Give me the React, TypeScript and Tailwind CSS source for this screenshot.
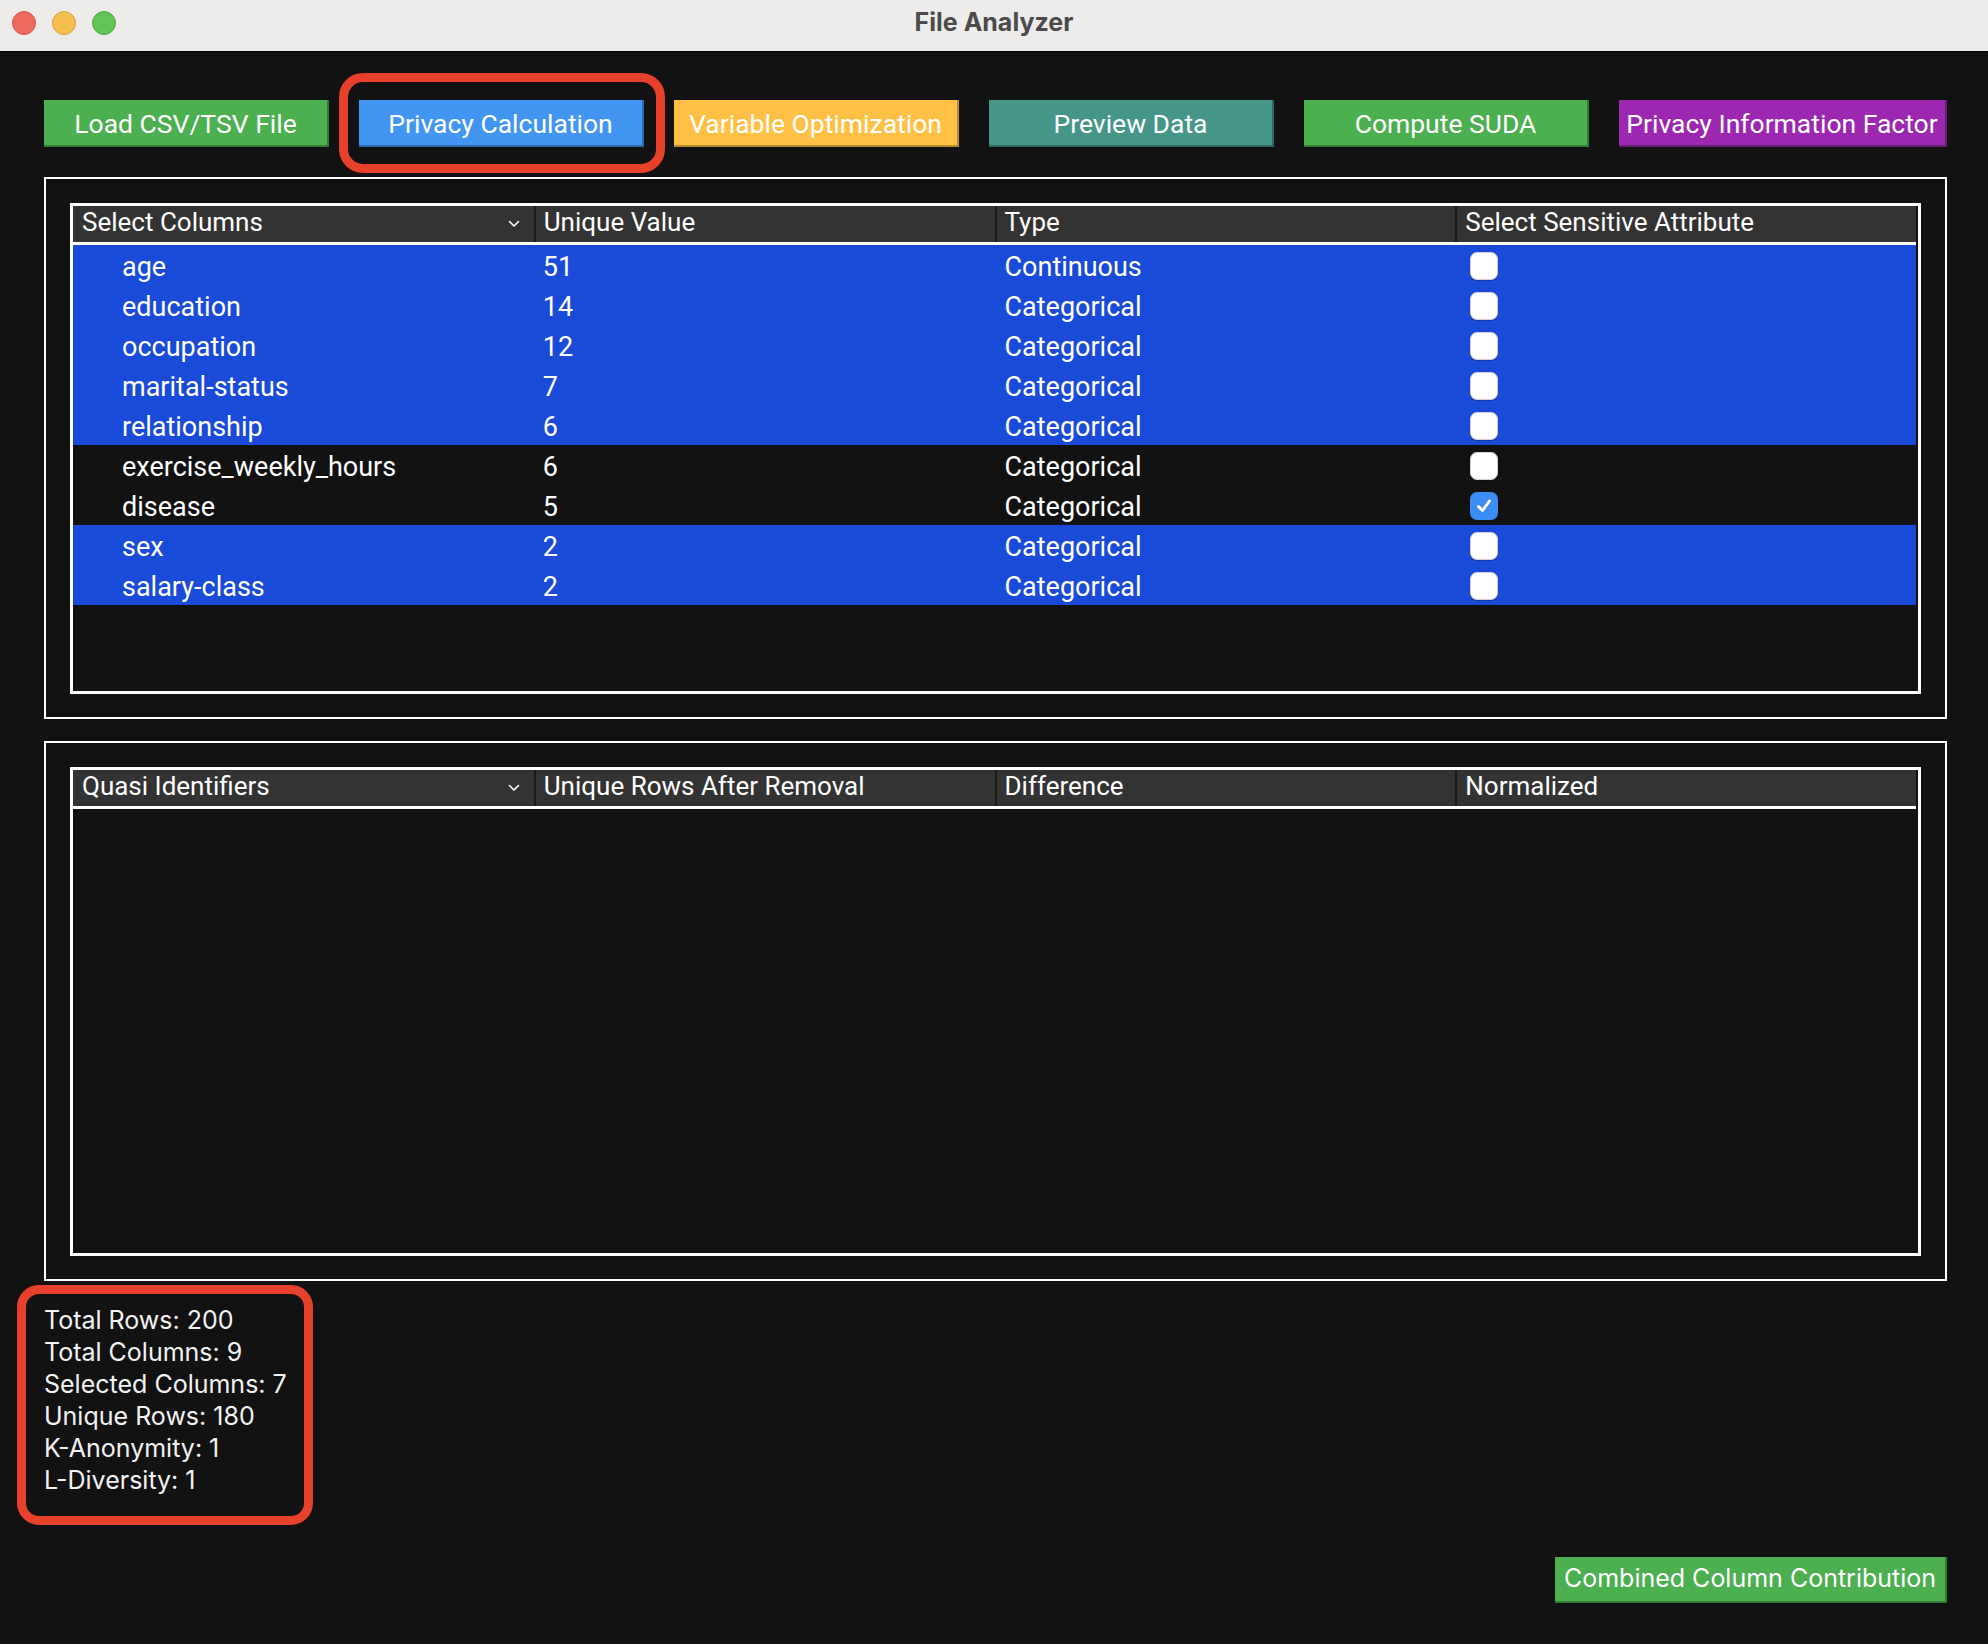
import React from "react";

type Row = { name: string; u: number; t: string; sel: boolean; chk: boolean };

const rows: Row[] = [
  { name: "age", u: 51, t: "Continuous", sel: true, chk: false },
  { name: "education", u: 14, t: "Categorical", sel: true, chk: false },
  { name: "occupation", u: 12, t: "Categorical", sel: true, chk: false },
  { name: "marital-status", u: 7, t: "Categorical", sel: true, chk: false },
  { name: "relationship", u: 6, t: "Categorical", sel: true, chk: false },
  { name: "exercise_weekly_hours", u: 6, t: "Categorical", sel: false, chk: false },
  { name: "disease", u: 5, t: "Categorical", sel: false, chk: true },
  { name: "sex", u: 2, t: "Categorical", sel: true, chk: false },
  { name: "salary-class", u: 2, t: "Categorical", sel: true, chk: false },
];

const roboto = { fontFamily: "Roboto, 'Liberation Sans', sans-serif" };
const inter = { fontFamily: "Inter, 'Noto Sans', sans-serif" };

function Checkbox({ checked }: { checked: boolean }) {
  if (checked) {
    return (
      <div className="flex h-[28px] w-[28px] items-center justify-center rounded-[7px] bg-[#3a8df5] shadow-[0_0_1px_rgba(0,0,0,0.6)]">
        <svg width="20" height="20" viewBox="0 0 20 20">
          <path
            d="M4.5 10.5 L8.5 14.5 L15.5 5"
            stroke="white"
            strokeWidth="2.9"
            fill="none"
            strokeLinecap="round"
            strokeLinejoin="round"
          />
        </svg>
      </div>
    );
  }
  return (
    <div className="h-[28px] w-[28px] rounded-[7px] border border-[#d0d0d0] bg-white shadow-[0_1px_1px_rgba(0,0,0,0.25)]" />
  );
}

function Chevron() {
  return (
    <svg width="12" height="8" viewBox="0 0 12 8">
      <path d="M1.5 1.5 L6 6 L10.5 1.5" stroke="white" strokeWidth="1.6" fill="none" strokeLinecap="round" strokeLinejoin="round" />
    </svg>
  );
}

function Header({ labels }: { labels: string[] }) {
  return (
    <div className="grid h-[39px] shrink-0 grid-cols-4 border-b-[3px] border-white bg-[#333333] text-[26px] text-white" style={roboto}>
      {labels.map((l, i) => (
        <div
          key={l}
          className={
            i === 0
              ? "flex items-center justify-between pb-[4px] pl-[9px] pr-[14px]"
              : "flex items-center border-l-2 border-[#1b1b1b] pb-[4px] pl-[8px]"
          }
        >
          <span className="leading-none">{l}</span>
          {i === 0 && (
            <span className="pt-[4px]">
              <Chevron />
            </span>
          )}
        </div>
      ))}
    </div>
  );
}

function Panel({ h, children }: { h: string; children: React.ReactNode }) {
  return (
    <div className={`${h} flex flex-col border-2 border-white px-[24px] pt-[24px] pb-[23px]`}>
      <div className="flex flex-1 flex-col border-[3px] border-white pr-[2px]">{children}</div>
    </div>
  );
}

function TopButton({ label, bg, edge, w }: { label: string; bg: string; edge: string; w: string }) {
  return (
    <div
      className={`${bg} ${edge} ${w} flex h-[47px] items-center justify-center whitespace-nowrap border-r-2 border-b-2 pt-[2px] text-[26.5px] text-white`}
      style={roboto}
    >
      {label}
    </div>
  );
}

export default function App() {
  return (
    <div className="flex h-[1644px] w-[1988px] flex-col overflow-hidden bg-[#121212]">
      {/* title bar */}
      <div className="relative flex h-[52px] shrink-0 items-center justify-center border-b border-black bg-[#edecea] pb-[5px]">
        <div className="absolute left-[12px] top-[11px] flex gap-[16px]">
          <div className="h-[24px] w-[24px] rounded-full border border-[#d8544a] bg-[#ee6a5e]" />
          <div className="h-[24px] w-[24px] rounded-full border border-[#d9a33d] bg-[#f5bf4f]" />
          <div className="h-[24px] w-[24px] rounded-full border border-[#52a942] bg-[#61c454]" />
        </div>
        <span className="text-[25px] font-bold text-[#4b4b4b]" style={inter}>
          File Analyzer
        </span>
      </div>

      <div className="flex flex-1 flex-col pl-[44px] pr-[41px]">
        {/* buttons */}
        <div className="mt-[48px] flex gap-[30px]">
          <TopButton label="Load CSV/TSV File" bg="bg-[#4caf50]" edge="border-[#2f7d32]" w="w-[285px]" />
          <div className="relative">
            <TopButton label="Privacy Calculation" bg="bg-[#4296f1]" edge="border-[#2a6bb5]" w="w-[285px]" />
            <div className="pointer-events-none absolute -left-[20px] -top-[27px] h-[100px] w-[326px] rounded-[24px] border-[9px] border-[#e8412b]" />
          </div>
          <TopButton label="Variable Optimization" bg="bg-[#ffc145]" edge="border-[#b98a2c]" w="w-[285px]" />
          <TopButton label="Preview Data" bg="bg-[#459688]" edge="border-[#2c6a5f]" w="w-[285px]" />
          <TopButton label="Compute SUDA" bg="bg-[#4caf50]" edge="border-[#2f7d32]" w="w-[285px]" />
          <TopButton label="Privacy Information Factor" bg="bg-[#9c27b0]" edge="border-[#6a1a78]" w="flex-1" />
        </div>

        {/* panel 1 */}
        <div className="mt-[30px]">
          <Panel h="h-[542px]">
            <Header labels={["Select Columns", "Unique Value", "Type", "Select Sensitive Attribute"]} />
            <div className="flex flex-col text-[27px] text-white" style={roboto}>
              {rows.map((r) => (
                <div key={r.name} className={`grid h-[40px] grid-cols-4 items-center ${r.sel ? "bg-[#1a4bd8]" : ""}`}>
                  <div className="pl-[49px] pt-[2px]">{r.name}</div>
                  <div className="pl-[9px] pt-[2px]">{r.u}</div>
                  <div className="pl-[10px] pt-[2px]">{r.t}</div>
                  <div className="pl-[15px]">
                    <Checkbox checked={r.chk} />
                  </div>
                </div>
              ))}
            </div>
          </Panel>
        </div>

        {/* panel 2 */}
        <div className="mt-[22px]">
          <Panel h="h-[540px]">
            <Header labels={["Quasi Identifiers", "Unique Rows After Removal", "Difference", "Normalized"]} />
          </Panel>
        </div>

        {/* stats */}
        <div className="relative mt-[23px] w-fit text-[25px] leading-[32px] text-[#f2f2f2]" style={inter}>
          <div>Total Rows: 200</div>
          <div>Total Columns: 9</div>
          <div>Selected Columns: 7</div>
          <div>Unique Rows: 180</div>
          <div>K-Anonymity: 1</div>
          <div>L-Diversity: 1</div>
          <div className="pointer-events-none absolute -left-[27px] -top-[19px] h-[240px] w-[296px] rounded-[22px] border-[9px] border-[#e8412b]" />
        </div>

        {/* bottom button */}
        <div className="mt-auto flex justify-end pb-[41px]">
          <div
            className="flex h-[46px] w-[392px] items-center justify-center whitespace-nowrap border-r-2 border-b-2 border-[#2f7d32] bg-[#4caf50] text-[25px] text-white"
            style={inter}
          >
            Combined Column Contribution
          </div>
        </div>
      </div>
    </div>
  );
}
